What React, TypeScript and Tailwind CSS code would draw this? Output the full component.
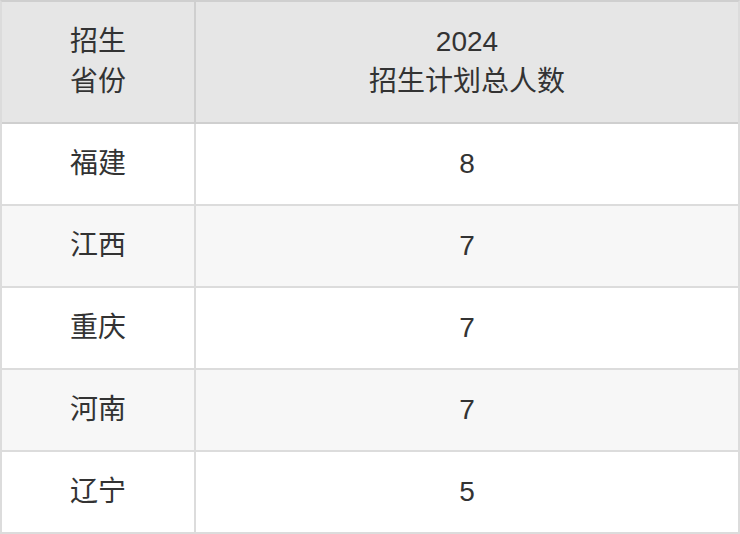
const rows = [
  { province: "福建", count: "8" },
  { province: "江西", count: "7" },
  { province: "重庆", count: "7" },
  { province: "河南", count: "7" },
  { province: "辽宁", count: "5" },
];

export default function App() {
  return (
    <div
      className="w-[740px] h-[534px] bg-white text-[28px] leading-[40px] text-[#333]"
      style={{ fontFamily: '"Liberation Sans", Arial, "Noto Sans CJK SC", sans-serif' }}
    >
      <div className="border-2 border-t-[#cfcfcf] border-x-[#dcdcdc] border-b-[#dcdcdc]">
        <div className="flex h-[122px] bg-[#e6e6e6] border-b-2 border-[#cfcfcf]">
          <div className="w-[194px] border-r-2 border-[#cfcfcf] flex flex-col items-center justify-center">
            <span>招生</span>
            <span>省份</span>
          </div>
          <div className="flex-1 flex flex-col items-center justify-center">
            <span>2024</span>
            <span>招生计划总人数</span>
          </div>
        </div>
        {rows.map((row, i) => (
          <div
            key={row.province}
            className={`flex ${i < rows.length - 1 ? "h-[82px] border-b-2 border-[#dcdcdc]" : "h-[80px]"} ${
              i % 2 === 1 ? "bg-[#f7f7f7]" : "bg-white"
            }`}
          >
            <div className="w-[194px] border-r-2 border-[#dcdcdc] flex items-center justify-center">
              {row.province}
            </div>
            <div className="flex-1 flex items-center justify-center">{row.count}</div>
          </div>
        ))}
      </div>
    </div>
  );
}
